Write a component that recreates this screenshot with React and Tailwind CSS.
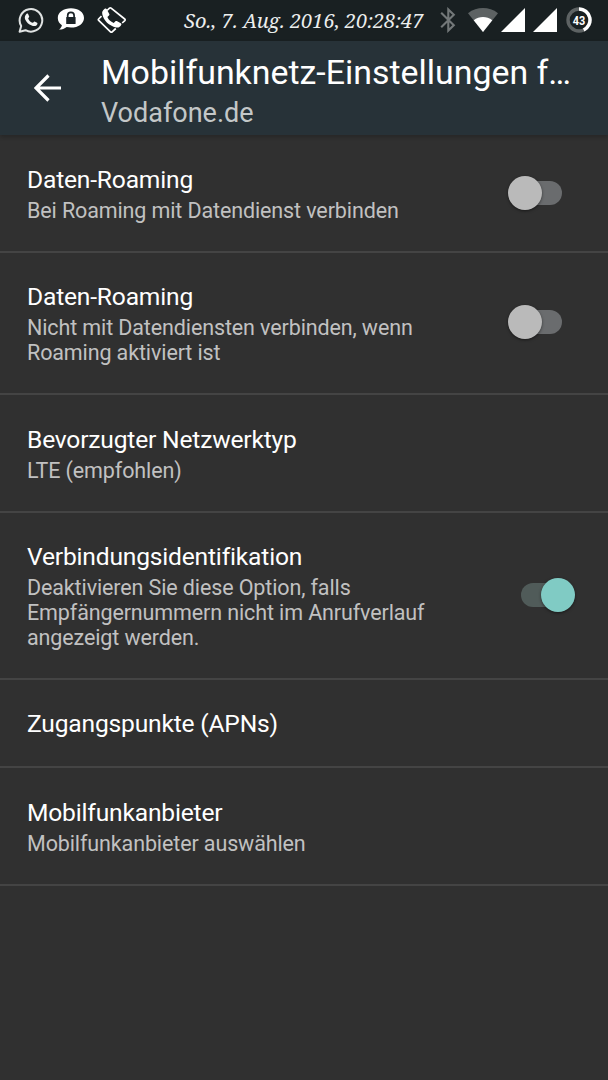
import React from "react";

function WhatsAppIcon() {
  return (
    <svg className="block h-[26px] w-[26px]" viewBox="0 0 26 26" fill="none">
      <path d="M1.600 24.800 3.200 19A11.300 11.300 0 1 1 7.500 23.200Z" stroke="#dfe2e2" strokeWidth="2" strokeLinejoin="round" />
      <path
        d="M8.600 6.800c.5-.5 1.200-.5 1.500.1l1.100 2.600c.2.500-.9 1.600-1 1.900.8 2.100 2.300 3.500 4.500 4.400.4 0 1.300-1.600 1.800-1.400l2.600 1.300c.7.400.3 1.800-.4 2.500-1.400 1.200-3.300 1.100-5 .4-3.200-1.300-5-3.200-6.500-6.100-.9-2-.2-4.300 1.400-5.700Z"
        fill="#f1f3f3"
      />
    </svg>
  );
}

function LockedChatIcon() {
  return (
    <svg className="block h-[23px] w-[28px]" viewBox="0 0 28 23">
      <path d="M14 .3C21.300.3 27 4.300 27 9.900S21.300 19.500 14 19.500c-1.600 0-3-.2-4.300-.5-2 1.700-4.600 2.500-7.700 2.600 1.600-1.300 2.600-2.700 2.900-4.400C2.400 15.500.8 12.900.8 9.900.8 4.300 6.700.3 14 .3Z" fill="#fff" />
      <path d="M10.700 10V7.500a3.200 3.200 0 0 1 6.400 0V10" fill="none" stroke="#1b2327" strokeWidth="1.700" />
      <rect x="9.200" y="9" width="9.400" height="7" rx=".6" fill="#1b2327" />
    </svg>
  );
}

function CallIcon() {
  return (
    <svg className="block h-[28px] w-[30px]" viewBox="0 0 30 28" fill="none">
      <path d="M10 4.500 12.500 2.100c.5-.4 1.100-.4 1.600 0L27.700 13c.6.500.6 1.100.1 1.600l-2.600 2.400M4.500 10.200 1.600 13c-.4.400-.4.900.1 1.300L13.500 25.800c.6.500 1.200.5 1.700 0l3.600-3.300" stroke="#fff" strokeWidth="1.700" />
      <path
        d="M7.700 2.800C5.600 4.200 4.800 6 5.300 8.300c1.300 6.500 6.800 11.500 13.800 13.200 2.400.5 4.200-.6 5.200-2.700.3-.7.100-1.200-.5-1.600l-4-2.100c-.7-.3-1.100-.2-1.600.3l-1.500 1.600c-3.100-1.200-5.200-3.200-6.300-5.900l1.600-1.600c.5-.5.6-1 .3-1.600L9.600 3.100c-.4-.7-1.100-.8-1.900-.3Z"
        fill="#fff"
      />
    </svg>
  );
}

function BluetoothIcon() {
  return (
    <svg className="block h-[26px] w-[16px]" viewBox="0 0 16 26" fill="none">
      <path d="m1.200 5.700 12.600 12.500-5.500 5.400V2.400l5.500 5.300L1.200 20.200" stroke="#737879" strokeWidth="2.100" />
    </svg>
  );
}

function WifiIcon() {
  return (
    <svg className="block h-[24px] w-[30px]" viewBox="0 0 30 24">
      <path d="M0 5.200C9-1.600 21-1.600 30 5.200L15 24Z" fill="#5d6263" />
      <path d="M5.700 12.300c5.600-4.300 13-4.300 18.600 0L15 24Z" fill="#fff" />
    </svg>
  );
}

function SignalIcon() {
  return (
    <svg className="block h-6 w-6" viewBox="0 0 24 24">
      <path d="M24 0v24H0Z" fill="#fff" />
    </svg>
  );
}

function BatteryIcon() {
  return (
    <svg className="block h-[26px] w-[26px]" viewBox="0 0 26 26">
      <circle cx="13" cy="13" r="11" fill="none" stroke="#5d6263" strokeWidth="3.400" />
      <path d="M13 2a11 11 0 0 1 4.700 20.950" fill="none" stroke="#fff" strokeWidth="3.400" />
      <text x="13" y="18" textAnchor="middle" fill="#fff" fontFamily="Roboto, sans-serif" fontWeight="700" fontSize="12.500" textLength="12.500" lengthAdjust="spacingAndGlyphs">43</text>
    </svg>
  );
}

function StatusBar() {
  return (
    <div className="flex h-[41px] w-full shrink-0 items-start bg-[#192022]">
      <div className="ml-[18px] mt-[7px] shrink-0"><WhatsAppIcon /></div>
      <div className="ml-[13px] mt-[8px] shrink-0"><LockedChatIcon /></div>
      <div className="ml-[12px] mt-[6px] shrink-0"><CallIcon /></div>
      <div className="ml-[57px] w-[240px] shrink-0 whitespace-nowrap font-['Noto_Serif','DejaVu_Serif_Condensed','DejaVu_Serif',serif] text-[20px] italic leading-[41px] text-[#eceeee]">
        So., 7. Aug. 2016, 20:28:47
      </div>
      <div className="ml-[16px] mt-[7px] shrink-0"><BluetoothIcon /></div>
      <div className="ml-[12px] mt-[8px] shrink-0"><WifiIcon /></div>
      <div className="ml-[3px] mt-[8px] shrink-0"><SignalIcon /></div>
      <div className="ml-[8px] mt-[8px] shrink-0"><SignalIcon /></div>
      <div className="ml-[9px] mt-[7px] shrink-0"><BatteryIcon /></div>
    </div>
  );
}

function Header() {
  return (
    <header className="flex h-[94px] shrink-0 bg-[#273238] shadow-[0_2px_4px_rgba(0,0,0,0.22)]">
      <button aria-label="Zurück" className="ml-[34px] mt-[33px] h-[28px] w-[28px]">
        <svg className="block h-[28px] w-[28px]" viewBox="0 0 28 28" fill="none">
          <path d="M27 14H2.500M14.500 1.500 2 14l12.500 12.500" stroke="#fff" strokeWidth="3.200" />
        </svg>
      </button>
      <div className="ml-[39px] pt-[11px]">
        <h1 className="whitespace-nowrap text-[33.900px] leading-[41px] text-white">Mobilfunknetz-Einstellungen f…</h1>
        <p className="mt-[3px] text-[27px] leading-[34px] text-[#c3c7c8]">Vodafone.de</p>
      </div>
    </header>
  );
}

function Toggle({ on }) {
  return on ? (
    <div role="switch" aria-checked="true" className="mb-[2px] mr-[33px] flex h-[34px] w-[54px] items-center">
      <span className="h-6 w-10 rounded-full bg-[#505b59]" />
      <span className="-ml-[20px] h-[34px] w-[34px] shrink-0 rounded-full bg-[#80cbc4] shadow-[0_1px_3px_rgba(0,0,0,0.5)]" />
    </div>
  ) : (
    <div role="switch" aria-checked="false" className="mb-[2px] mr-[46px] flex h-[34px] w-[54px] items-center">
      <span className="z-10 h-[34px] w-[34px] shrink-0 rounded-full bg-[#bababa] shadow-[0_1px_3px_rgba(0,0,0,0.5)]" />
      <span className="-ml-[20px] h-6 w-10 rounded-full bg-[#6a6c6e]" />
    </div>
  );
}

const rows = [
  { title: "Daten-Roaming", lines: ["Bei Roaming mit Datendienst verbinden"], toggle: "off", height: "h-[117px]" },
  { title: "Daten-Roaming", lines: ["Nicht mit Datendiensten verbinden, wenn", "Roaming aktiviert ist"], toggle: "off", height: "h-[142px]" },
  { title: "Bevorzugter Netzwerktyp", lines: ["LTE (empfohlen)"], height: "h-[118px]" },
  { title: "Verbindungsidentifikation", lines: ["Deaktivieren Sie diese Option, falls", "Empfängernummern nicht im Anrufverlauf", "angezeigt werden."], toggle: "on", height: "h-[167px]" },
  { title: "Zugangspunkte (APNs)", lines: [], height: "h-[88px]" },
  { title: "Mobilfunkanbieter", lines: ["Mobilfunkanbieter auswählen"], height: "h-[118px]" },
];

function SettingRow({ title, lines, toggle, height }) {
  return (
    <li className={`flex items-center justify-between border-b-2 border-[#444444] pl-[27px] ${height}`}>
      <div className="whitespace-nowrap">
        <h2 className="text-[24.600px] leading-[33px] tracking-[-0.19px] text-white">{title}</h2>
        {lines.length > 0 && (
          <div className="mt-[3px] text-[21.500px] leading-[24.700px] tracking-[-0.12px] text-[#c1c1c1]">
            {lines.map((line) => (
              <p key={line}>{line}</p>
            ))}
          </div>
        )}
      </div>
      {toggle && <Toggle on={toggle === "on"} />}
    </li>
  );
}

export default function App() {
  return (
    <div className="flex h-[1080px] w-[608px] flex-col overflow-hidden bg-[#303030] font-[Roboto,sans-serif]">
      <StatusBar />
      <Header />
      <ul className="mt-px">
        {rows.map((row, i) => (
          <SettingRow key={i} {...row} />
        ))}
      </ul>
    </div>
  );
}
